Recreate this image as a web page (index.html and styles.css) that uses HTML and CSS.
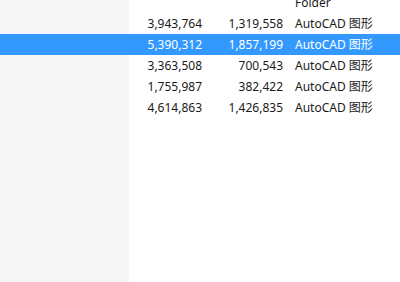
FILE: index.html
```html
<!DOCTYPE html>
<html lang="zh-CN">
<head>
    <meta charset="UTF-8">
    <meta name="viewport" content="width=device-width, initial-scale=1.0">
    <title>文件列表</title>
    <link rel="stylesheet" href="styles.css">
</head>
<body>
    <!-- Details view: size, packed size, type -->
    <div class="file-list">
        <div class="row">
            <span class="gutter"></span>
            <span class="num"></span>
            <span class="num"></span>
            <span class="type">Folder</span>
        </div>
        <div class="row">
            <span class="gutter"></span>
            <span class="num">3,943,764</span>
            <span class="num">1,319,558</span>
            <span class="type">AutoCAD 图形</span>
        </div>
        <div class="row selected">
            <span class="gutter"></span>
            <span class="num">5,390,312</span>
            <span class="num">1,857,199</span>
            <span class="type">AutoCAD 图形</span>
        </div>
        <div class="row">
            <span class="gutter"></span>
            <span class="num">3,363,508</span>
            <span class="num">700,543</span>
            <span class="type">AutoCAD 图形</span>
        </div>
        <div class="row">
            <span class="gutter"></span>
            <span class="num">1,755,987</span>
            <span class="num">382,422</span>
            <span class="type">AutoCAD 图形</span>
        </div>
        <div class="row">
            <span class="gutter"></span>
            <span class="num">4,614,863</span>
            <span class="num">1,426,835</span>
            <span class="type">AutoCAD 图形</span>
        </div>
    </div>
</body>
</html>
```

FILE: styles.css
```css
/* Explorer-like details list */
html, body {
    height: 100%;
}
body {
    margin: 0;
    font-family: "Noto Sans", "Noto Sans CJK SC", sans-serif;
    font-size: 12px;
    color: #1a1a1a;
    /* left navigation pane */
    background: linear-gradient(to right, #f6f6f6 129px, #ffffff 129px);
    overflow: hidden;
}
.file-list {
    margin-top: -8px;
}
.row {
    display: grid;
    grid-template-columns: 129px 73px 81px 1fr;
    height: 21px;
    line-height: 21px;
    white-space: nowrap;
}
.row.selected {
    background: #3399ff;
    color: #ffffff;
}
.num {
    text-align: right;
}
.type {
    padding-left: 12px;
}
```
